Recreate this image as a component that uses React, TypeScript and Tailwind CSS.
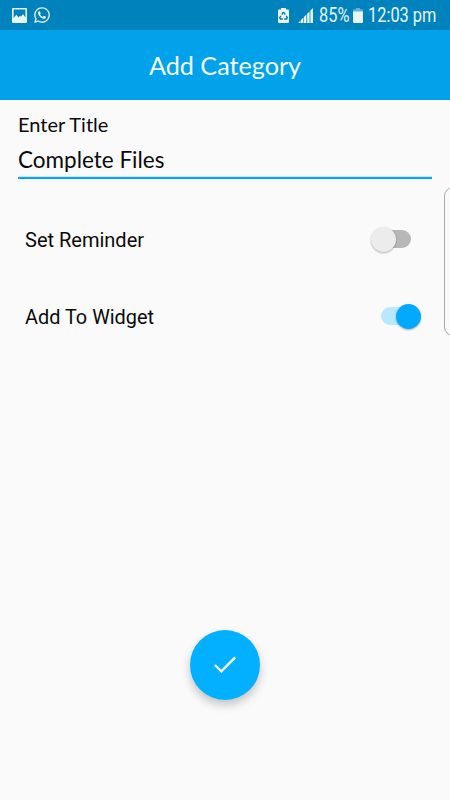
import React from "react";
import { FaWhatsapp } from "react-icons/fa";

function StatusBar() {
  return (
    <div className="flex h-[30px] items-center bg-[#0082bd] text-[#e8f5fb]">
      <svg className="ml-3 h-[15px] w-[15px] shrink-0" viewBox="0 0 15 15">
        <path fill="currentColor" fillRule="evenodd" d="M1 0H14Q15 0 15 1V14Q15 15 14 15H1Q0 15 0 14V1Q0 0 1 0ZM1.6 1.4V10L4.3 6.8L6.6 9.4L8 7.8L9 8.8L11 6L13.4 9.6V1.4Z" />
      </svg>
      <FaWhatsapp className="ml-[6px] h-[18px] w-[18px] shrink-0" />
      <svg className="ml-[227px] h-[15px] w-[11px] shrink-0" viewBox="0 0 11 15">
        <path fill="currentColor" d="M3 0H8V1.5H10Q11 1.5 11 2.5V14Q11 15 10 15H1Q0 15 0 14V2.5Q0 1.5 1 1.5H3Z" />
        <g fill="none" stroke="#0075ae" strokeWidth="1.3">
          <path d="M3.7 6.6L5 4.6H6L7.3 6.6" />
          <path d="M8.3 7.8L9.3 9.6L8.6 11H6.2" />
          <path d="M4.8 11H2.4L1.7 9.6L2.9 7.8" />
        </g>
      </svg>
      <svg className="ml-[9px] h-[15px] w-[15px] shrink-0" viewBox="0 0 15 15">
        <path fill="currentColor" d="M0 15L2.6 12.4V15ZM3 12L5.4 9.6V15H3ZM6 9L8.4 6.6V15H6ZM9.2 5.8L11.6 3.4V15H9.2ZM12.4 2.6L15 0V15H12.4Z" />
      </svg>
      <div className="ml-[6px] w-[31px] shrink-0">
        <span className="inline-block origin-left scale-x-[0.84] pt-[2px] text-[19.5px] leading-[28px]">85%</span>
      </div>
      <svg className="ml-[3px] h-[15px] w-[10px] shrink-0" viewBox="0 0 10 15">
        <path fill="#62b1d6" d="M3 0H7V1.3H9Q10 1.3 10 2.3V4H0V2.3Q0 1.3 1 1.3H3Z" />
        <path fill="currentColor" d="M0 3.5H10V14Q10 15 9 15H1Q0 15 0 14Z" />
      </svg>
      <div className="ml-[5px] w-[70px] shrink-0 whitespace-nowrap">
        <span className="inline-block origin-left scale-x-[0.84] pt-[2px] text-[19.5px] leading-[28px]">12:03 pm</span>
      </div>
    </div>
  );
}

function Toggle({ on }: { on: boolean }) {
  return (
    <div className={`relative flex h-[26px] w-10 items-center ${on ? "justify-end" : "justify-start"}`}>
      <div className={`absolute h-[18px] w-[30px] rounded-full ${on ? "left-0 bg-[#b9e7fc]" : "right-0 bg-[#b7b7b7]"}`} />
      <div className={`relative h-[25px] w-[25px] rounded-full shadow-[0_1px_2px_rgba(0,0,0,0.3)] ${on ? "bg-[#03a9fc]" : "bg-[#ececec]"}`} />
    </div>
  );
}

export default function App() {
  return (
    <div className="relative flex h-[800px] w-[450px] flex-col overflow-hidden bg-[#fafafa] font-['Roboto',sans-serif] text-[#0b0b0b]">
      <StatusBar />
      <header className="flex h-[70px] items-center justify-center bg-[#02a2ea] pt-[2px] font-['Lato',sans-serif] text-[25.2px] text-[#f4fbff]">
        Add Category
      </header>
      <main className="flex flex-1 flex-col">
        <div className="mx-[18px] flex flex-col pt-[11px] font-['Lato',sans-serif]">
          <label className="h-[26px] text-[20px] leading-[26px]">Enter Title</label>
          <div className="h-[39px] pt-[8px] text-[22.5px] leading-[30px]">Complete Files</div>
          <div className="h-[3px] border-t border-[#c8e9fb] bg-[#03a4fb]" />
        </div>
        <div className="mt-[47px] flex h-[26px] items-center justify-between pr-[39px] pl-[25px] text-[20px]">
          <span className="pt-[2px]">Set Reminder</span>
          <Toggle on={false} />
        </div>
        <div className="mt-[51px] flex h-[26px] items-center justify-between pr-[29px] pl-[25px] text-[19.9px]">
          <span className="pt-1">Add To Widget</span>
          <Toggle on />
        </div>
        <button className="mx-auto mt-auto mb-[100px] flex h-[70px] w-[70px] items-center justify-center rounded-full bg-[#03b0ff] shadow-[0_5px_10px_rgba(0,0,0,0.22)]">
          <svg className="h-[18px] w-[22px]" viewBox="0 0 22 18" fill="none" stroke="white" strokeWidth="2.2">
            <path d="M0.8 9L7.3 15.4L21.2 1.4" />
          </svg>
        </button>
      </main>
      <div className="absolute top-[187px] left-[444px] h-[149px] w-[30px] rounded-[9px] border border-[#aaaaaa]" />
    </div>
  );
}
